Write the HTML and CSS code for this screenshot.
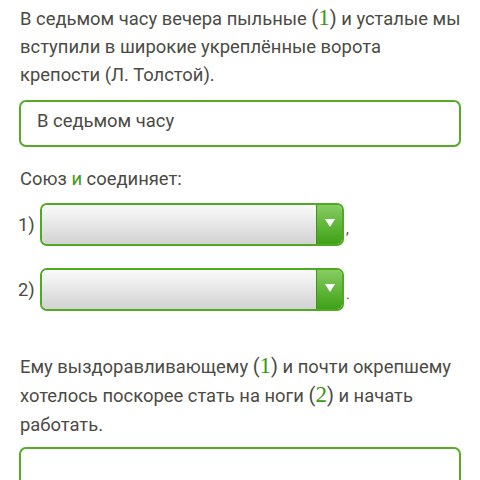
FILE: index.html
```html
<!DOCTYPE html>
<html lang="ru">
<head>
<meta charset="utf-8">
<link rel="stylesheet" href="styles.css">
</head>
<body>
<div class="page">
  <p class="task">В седьмом часу вечера пыльные <span class="num">(</span><span class="mark">1</span><span class="num">)</span> и усталые мы вступили в широкие укреплённые ворота крепости (Л. Толстой).</p>
  <div class="answer">В седьмом часу</div>
  <p class="label">Союз <span class="green">и</span> соединяет:</p>
  <div class="choice">
    <span class="idx">1)</span>
    <div class="select"><div class="field"></div><div class="btn"><svg width="10" height="8" viewBox="0 0 10 8"><polygon points="0,0 10,0 5,8" fill="#fff"/></svg></div></div>
    <span class="punct">,</span>
  </div>
  <div class="choice second">
    <span class="idx">2)</span>
    <div class="select"><div class="field"></div><div class="btn"><svg width="10" height="8" viewBox="0 0 10 8"><polygon points="0,0 10,0 5,8" fill="#fff"/></svg></div></div>
    <span class="punct">.</span>
  </div>
  <p class="task task2">Ему выздоравливающему <span class="num">(</span><span class="mark">1</span><span class="num">)</span> и почти окрепшему хотелось поскорее стать на ноги <span class="num">(</span><span class="mark">2</span><span class="num">)</span> и начать работать.</p>
  <div class="answer empty"></div>
</div>
</body>
</html>
```
FILE: styles.css
```css
html, body {
  margin: 0;
  padding: 0;
  background: #fff;
}
.page {
  padding: 5px 16px 0 20px;
  font-family: Roboto, "Noto Sans", sans-serif;
  font-size: 18.4px;
  letter-spacing: 0;
  color: #4b4b43;
  display: flex;
  flex-direction: column;
}
.task {
  margin: 0;
  line-height: 28px;
}
.mark {
  font-family: "Liberation Serif", "DejaVu Serif", serif;
  font-size: 23px;
  color: #3c9a14;
  line-height: 1;
}
.num {
  font-size: 20px;
  line-height: 1;
}
.answer {
  margin-top: 11px;
  margin-right: 3px;
  height: 43px;
  border: 2px solid #55ab27;
  border-radius: 7px;
  padding: 0 16px;
  line-height: 38px;
  margin-left: -1px;
}
.label {
  margin: 18px 0 0 0;
  line-height: 28px;
}
.green {
  color: #3c9a14;
}
.choice {
  margin-top: 10px;
  display: flex;
  align-items: center;
  gap: 2px;
  margin-left: -2px;
}
.choice.second {
  margin-top: 22px;
}
.idx {
  width: 20px;
  line-height: 28px;
}
.select {
  width: 300px;
  height: 39px;
  border: 2px solid #4fa923;
  border-radius: 7px;
  display: flex;
  overflow: hidden;
}
.field {
  flex: 1;
  background: linear-gradient(#fafafa, #d2d2d2);
  border-right: 1px solid #3d9418;
}
.btn {
  width: 25px;
  background: linear-gradient(#86cc62, #3ea116);
  display: flex;
  align-items: center;
  justify-content: center;
  padding-bottom: 4px;
  box-sizing: border-box;
}
.punct {
  font-size: 14px;
  line-height: 28px;
  margin-top: 8px;
}
.task2 {
  margin-top: 41px;
  line-height: 29px;
}
.empty {
  margin-top: 8px;
  height: 60px;
}
```
